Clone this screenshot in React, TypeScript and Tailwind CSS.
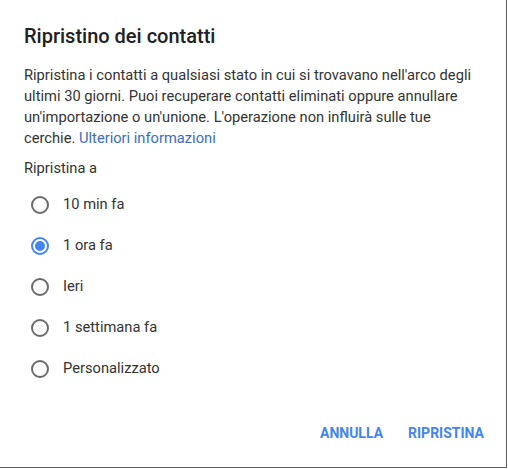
import React, { useState } from "react";

const options = ["10 min fa", "1 ora fa", "Ieri", "1 settimana fa", "Personalizzato"];

export default function App() {
    const [selected, setSelected] = useState(1);

    return (
        <div className="w-[508px] h-[469px] bg-white">
            <div className="w-[507px] h-[468px] bg-white border-r border-b border-[#5f5f5f] flex flex-col font-['Roboto',sans-serif] text-[#212121]">
                <div className="px-6 pt-[24px]">
                    <h1 className="text-[20px] leading-6 font-medium">Ripristino dei contatti</h1>
                    <p className="mt-[17px] text-[14.7px] leading-[21px] text-[#333]">
                        Ripristina i contatti a qualsiasi stato in cui si trovavano nell'arco degli<br />
                        ultimi 30 giorni. Puoi recuperare contatti eliminati oppure annullare<br />
                        un'importazione o un'unione. L'operazione non influirà sulle tue<br />
                        cerchie. <a href="#" className="text-[#3b6dc2]">Ulteriori informazioni</a>
                    </p>
                    <div className="mt-[9px] text-[14.7px] leading-5 text-[#333]">Ripristina a</div>
                    <div className="mt-[6px] flex flex-col">
                        {options.map((opt, i) => (
                            <label key={opt} onClick={() => setSelected(i)} className="flex items-center h-[41px] cursor-pointer">
                                <span className="ml-[7px] w-[18px] h-[18px] rounded-full flex items-center justify-center border-2 border-solid"
                                      style={{ borderColor: selected === i ? "#4285f4" : "#6b6b6b" }}>
                                    {selected === i ? <span className="w-[10px] h-[10px] rounded-full bg-[#4285f4]" /> : null}
                                </span>
                                <span className="ml-[14px] text-[14.7px] text-[#333]">{opt}</span>
                            </label>
                        ))}
                    </div>
                </div>
                <div className="mt-auto mb-[23px] flex justify-end gap-[25px] pr-[22px]">
                    <button className="text-[14px] font-bold text-[#4285f4]">ANNULLA</button>
                    <button className="text-[14px] font-bold text-[#4285f4]">RIPRISTINA</button>
                </div>
            </div>
        </div>
    )
}
